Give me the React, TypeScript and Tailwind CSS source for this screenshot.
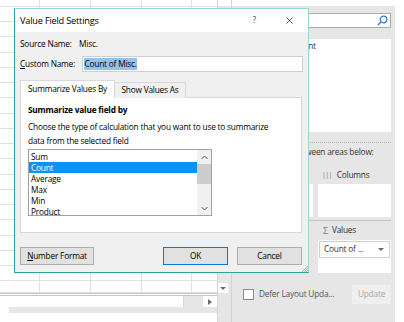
import React from "react";

const rowClasses = ["h-[7px]", ...Array(18).fill("h-[15.24px]"), "flex-1"];

function SheetRow({ cls }: { cls: string }) {
  return (
    <div className={`${cls} flex shrink-0`}>
      <div className="w-[40px] border-r border-b border-[#e1e1e1]" />
      <div className="w-[51px] border-r border-b border-[#e1e1e1]" />
      <div className="w-[51px] border-r border-b border-[#e1e1e1]" />
      <div className="w-[50px] border-r border-b border-[#e1e1e1]" />
      <div className="flex-1 border-b border-[#e1e1e1]" />
    </div>
  );
}

function Chevron({ up }: { up?: boolean }) {
  return (
    <svg width="7" height="5" viewBox="0 0 7 5" className="text-[#606060]">
      <polyline
        points={up ? "0.5,4 3.5,1 6.5,4" : "0.5,1 3.5,4 6.5,1"}
        fill="none"
        stroke="currentColor"
        strokeWidth="1"
      />
    </svg>
  );
}

const fns = ["Sum", "Count", "Average", "Max", "Min", "Product"];

export default function App() {
  return (
    <div className="relative w-[404px] h-[322px] overflow-hidden bg-white flex font-['Open_Sans',sans-serif] text-[8.3px] tracking-[-0.2px] text-black">
      {/* sheet */}
      <div className="w-[217px] h-full flex flex-col">
        <div className="h-[293px] flex flex-col overflow-hidden">
          {rowClasses.map((c, i) => (
            <SheetRow key={i} cls={c} />
          ))}
        </div>
        <div className="h-[3px] border-t border-b border-[#c4c4c4]" />
        <div className="h-[11px] flex">
          <div className="w-[9px]" />
          <div className="w-[175px] bg-white border-r border-[#d6d6d6]" />
          <div className="w-[19px] bg-[#e6e6e6]" />
          <div className="flex-1 bg-white flex items-center justify-center">
            <svg width="4" height="6" viewBox="0 0 4 6">
              <polygon points="0,0 4,3 0,6" fill="#6a6a6a" />
            </svg>
          </div>
        </div>
        <div className="h-[6px] ml-[9px] bg-[#e6e6e6]" />
        <div className="flex-1" />
      </div>

      {/* vertical scrollbar column */}
      <div className="w-[15px] h-full flex flex-col border-l border-r border-[#d4d4d4]">
        <div className="h-[6px] bg-white" />
        <div className="flex-1 bg-[#e6e6e6] flex flex-col">
          <div className="h-[277px]" />
          <div className="w-[10px] h-[10px] bg-white flex items-center justify-center">
            <svg width="6" height="3" viewBox="0 0 6 3">
              <polygon points="0,0 6,0 3,3" fill="#6a6a6a" />
            </svg>
          </div>
        </div>
      </div>

      {/* pivot field pane */}
      <div className="w-[163px] h-full flex flex-col bg-[#e6e6e6]">
        <div className="h-[6px] bg-white" />
        <div className="pl-[8px] pr-[4px] flex flex-col">
          <div className="mt-[7px] h-[15px] bg-white border border-[#ababab] flex items-center justify-end pr-[2px]">
            <svg width="11" height="11" viewBox="0 0 11 11">
              <circle cx="6.5" cy="4.5" r="3.3" fill="none" stroke="#2b79d0" strokeWidth="1.2" />
              <line x1="4.2" y1="6.8" x2="1" y2="10" stroke="#2b79d0" strokeWidth="1.4" />
            </svg>
          </div>
          <div className="mt-[11px] h-[93px] bg-white pt-[1px] pl-[46px] text-[#333]">Amount</div>
          <div className="mt-[10px] border-t border-dotted border-[#b8b8b8]" />
          <div className="mt-[3px] h-[12px] leading-[12px] pl-[12px] text-[#333]">
            Drag fields between areas below:
          </div>
          <div className="mt-[8px] grid grid-cols-2 gap-x-[5px]">
            <div className="h-[18px] flex items-center pl-[6px] text-[#333]">Filters</div>
            <div className="h-[18px] flex items-center pl-[4px] text-[#333]">
              <span className="text-[#7a7a7a] text-[7px] tracking-[-0.6px] mr-[5px]">|||</span>
              Columns
            </div>
            <div className="h-[33px] bg-white" />
            <div className="h-[33px] bg-white" />
          </div>
          <div className="mt-[3px] h-[1px] bg-[#c4c4c4]" />
          <div className="grid grid-cols-2 gap-x-[5px]">
            <div className="h-[19px] flex items-center pl-[6px] text-[#333]">Rows</div>
            <div className="h-[19px] flex items-center pl-[4px] text-[#333]">
              <span className="text-[#7a7a7a] text-[9px] mr-[4px] ml-[1px]">Σ</span>Values
            </div>
            <div className="h-[33px] w-[68px] bg-white" />
            <div className="h-[33px] bg-white">
              <div className="h-[17px] mx-[1px] mt-[1px] border border-[#d0d0d0] flex items-center pl-[4px] pr-[5px] text-[#333]">
                <span className="flex-1">Count of ...</span>
                <svg width="6" height="3" viewBox="0 0 6 3">
                  <polygon points="0,0 6,0 3,3" fill="#6a6a6a" />
                </svg>
              </div>
            </div>
          </div>
          <div className="mt-[12px] flex items-center">
            <div className="ml-[3px] w-[11px] h-[11px] bg-white border border-[#8a8a8a]" />
            <span className="ml-[5px] text-[#555]">Defer Layout Upda...</span>
            <div className="ml-auto w-[39px] h-[19px] bg-[#efefef] flex items-center justify-center text-[#a8a8a8]">
              Update
            </div>
          </div>
        </div>
      </div>

      <div className="w-[9px] h-full bg-white" />

      {/* dialog */}
      <div className="absolute left-[14px] top-[8px] w-[295px] h-[265px] flex flex-col border border-t-[#9ad6d6] border-r-[#9ad6d6] border-l-[#2aa3a3] border-b-[#2aa3a3] bg-[#f0f0f0]">
        <div className="h-[23px] bg-white flex items-center pl-[5px] pr-[15px] shrink-0">
          <span className="text-[9.2px]">Value Field Settings</span>
          <span className="ml-auto mr-[30px] text-[#444] text-[8.5px]">?</span>
          <svg width="7" height="7" viewBox="0 0 7 7">
            <path d="M0.5 0.5 L6.5 6.5 M6.5 0.5 L0.5 6.5" stroke="#333" strokeWidth="0.8" />
          </svg>
        </div>
        <div className="flex-1 px-[5px] flex flex-col relative">
          <div className="mt-[6px] h-[12px] flex items-center">
            <span className="w-[59px]">Source Name:</span>
            <span>Misc.</span>
          </div>
          <div className="mt-[6px] h-[16px] flex items-center">
            <span className="w-[62px]">
              <span className="underline">C</span>ustom Name:
            </span>
            <div className="flex-1 h-full bg-white border border-[#cfcfcf] flex items-center pl-[1px]">
              <span className="bg-[#90c3ee] leading-[12px] px-[0.5px]">Count of Misc.</span>
            </div>
          </div>
          <div className="mt-[8px] flex items-end relative z-10">
            <div className="w-[95px] h-[18px] bg-white border border-b-0 border-[#d9d9d9] flex items-center justify-center">
              Summarize Values By
            </div>
            <div className="w-[71px] h-[16px] bg-[#f0f0f0] border border-l-0 border-b-0 border-[#d9d9d9] flex items-center justify-center">
              Show Values As
            </div>
          </div>
          <div className="-mt-px mr-[1px] h-[136px] bg-white border border-[#d9d9d9] px-[7px] pt-[6px]">
            <div className="h-[12px] leading-[12px] font-bold">Summarize value field by</div>
            <div className="mt-[4px] leading-[14px]">
              Choose the type of calculation that you want to use to summarize
              <br />
              data from the selected field
            </div>
            <div className="mt-[1px] w-[184px] h-[67px] border border-[#a0a0a0] flex">
              <div className="flex-1 pt-[0.5px]">
                {fns.map((f) => (
                  <div
                    key={f}
                    className={`h-[11px] leading-[11px] pl-[2px] ${
                      f === "Count" ? "bg-[#0a93f5] text-white" : ""
                    }`}
                  >
                    {f}
                  </div>
                ))}
              </div>
              <div className="w-[14px] bg-[#f0f0f0] flex flex-col items-center">
                <div className="h-[14px] flex items-center justify-center">
                  <Chevron up />
                </div>
                <div className="w-full h-[20px] bg-[#cdcdcd]" />
                <div className="flex-1" />
                <div className="h-[13px] flex items-center justify-center">
                  <Chevron />
                </div>
              </div>
            </div>
          </div>
          <div className="mt-[14px] flex items-center">
            <div className="w-[74px] h-[18px] bg-[#e1e1e1] border border-[#adadad] flex items-center justify-center">
              <span>
                <span className="underline">N</span>umber Format
              </span>
            </div>
            <div className="ml-[69px] w-[65px] h-[18px] bg-[#e1e1e1] border border-[#0078d7] flex items-center justify-center">
              OK
            </div>
            <div className="ml-[9px] w-[65px] h-[18px] bg-[#e1e1e1] border border-[#adadad] flex items-center justify-center">
              Cancel
            </div>
          </div>
          <svg
            width="6"
            height="6"
            viewBox="0 0 6 6"
            className="absolute right-0 bottom-0"
          >
            <path d="M6 0 L0 6 M6 2 L2 6 M6 4 L4 6" stroke="#9a9a9a" strokeWidth="0.7" />
          </svg>
        </div>
      </div>
    </div>
  );
}
